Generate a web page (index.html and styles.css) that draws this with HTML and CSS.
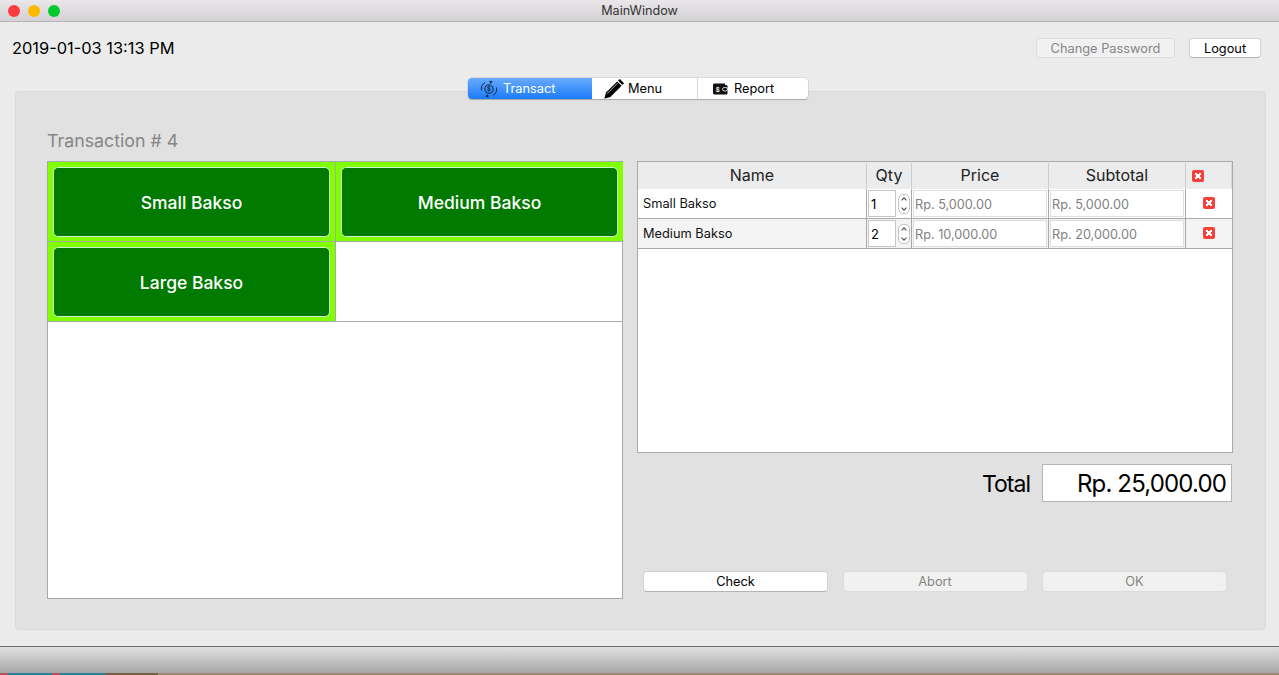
FILE: index.html
```html
<!DOCTYPE html>
<html lang="en">
<head>
    <meta charset="UTF-8">
    <title>MainWindow</title>
    <link rel="stylesheet" href="styles.css">
</head>
<body>
    <div class="window">
        <div class="titlebar">
            <div class="lights">
                <span class="light red"></span>
                <span class="light yellow"></span>
                <span class="light green"></span>
            </div>
            <span class="title">MainWindow</span>
        </div>

        <div class="content">
            <div class="topbar">
                <span class="clock">2019-01-03 13:13 PM</span>
                <div class="top-actions">
                    <button class="btn disabled change-pass">Change Password</button>
                    <button class="btn logout">Logout</button>
                </div>
            </div>

            <div class="tabs">
                <div class="tab active tab-transact">
                    <svg class="tab-icon" width="18" height="18" viewBox="0 0 18 18">
                        <circle cx="9" cy="9" r="4.2" fill="none" stroke="#10233f" stroke-width="1"/>
                        <text x="9" y="11.1" text-anchor="middle" class="dollar">$</text>
                        <path d="M1.5 10.5A7.6 7.6 0 0 1 5 2.5" fill="none" stroke="#10233f" stroke-width="0.9"/>
                        <path d="M16.5 7.5A7.6 7.6 0 0 1 13 15.5" fill="none" stroke="#10233f" stroke-width="0.9"/>
                        <path d="M9.5 0.4L13 1.8 10 3.8Z" fill="#10233f"/>
                        <path d="M8.5 17.6L5 16.2 8 14.2Z" fill="#10233f"/>
                    </svg>
                    <span>Transact</span>
                </div>
                <div class="tab tab-menu">
                    <svg class="tab-icon" width="20" height="20" viewBox="0 0 20 20">
                        <path d="M0.5 19.5L2 13.6 13.2 2.4 17.6 6.8 6.4 18Z" fill="#000"/>
                        <path d="M14 1.6L15.8 0 20 4.2 18.4 6Z" fill="#000"/>
                        <path d="M3.2 14.6L13.6 4.2" stroke="#fff" stroke-width="0.7"/>
                        <path d="M1.4 16.2L3.8 18.6 0.5 19.5Z" fill="#000"/>
                    </svg>
                    <span>Menu</span>
                </div>
                <div class="tab tab-report">
                    <svg class="tab-icon" width="15" height="12" viewBox="0 0 15 12">
                        <path d="M1.5 0.5H12V2H13C14 2 14.5 2.6 14.5 3.5V10C14.5 11 14 11.5 13 11.5H1.5C0.7 11.5 0 10.9 0 10V2C0 1.1 0.7 0.5 1.5 0.5Z" fill="#111"/>
                        <rect x="9.5" y="4.5" width="5" height="3.4" rx="1.7" fill="none" stroke="#fff" stroke-width="0.8"/>
                        <text x="4.6" y="8.6" text-anchor="middle" class="wallet-mark">$</text>
                    </svg>
                    <span>Report</span>
                </div>
            </div>

            <div class="panel">
                <h2 class="heading">Transaction # 4</h2>
                <div class="columns">
                    <div class="products">
                        <div class="cell filled"><button class="product">Small Bakso</button></div>
                        <div class="cell filled"><button class="product">Medium Bakso</button></div>
                        <div class="cell filled"><button class="product">Large Bakso</button></div>
                        <div class="cell"></div>
                    </div>

                    <div class="side">
                        <div class="order">
                            <div class="order-row order-head">
                                <div class="hcell"><span class="hlabel">Name</span></div>
                                <div class="hcell"><span class="hlabel">Qty</span></div>
                                <div class="hcell"><span class="hlabel">Price</span></div>
                                <div class="hcell"><span class="hlabel">Subtotal</span></div>
                                <div class="hcell hcell-x"><span class="del"></span></div>
                            </div>
                            <div class="order-row line">
                                <div class="dcell name">Small Bakso</div>
                                <div class="dcell qty">
                                    <span class="qty-val">1</span>
                                    <span class="stepper"><i class="up"></i><i class="down"></i></span>
                                </div>
                                <div class="dcell"><span class="ro">Rp. 5,000.00</span></div>
                                <div class="dcell"><span class="ro">Rp. 5,000.00</span></div>
                                <div class="dcell x"><span class="del"></span></div>
                            </div>
                            <div class="order-row line alt">
                                <div class="dcell name">Medium Bakso</div>
                                <div class="dcell qty">
                                    <span class="qty-val">2</span>
                                    <span class="stepper"><i class="up"></i><i class="down"></i></span>
                                </div>
                                <div class="dcell"><span class="ro">Rp. 10,000.00</span></div>
                                <div class="dcell"><span class="ro">Rp. 20,000.00</span></div>
                                <div class="dcell x"><span class="del"></span></div>
                            </div>
                        </div>

                        <div class="total-row">
                            <span class="total-label">Total</span>
                            <span class="total-val">Rp. 25,000.00</span>
                        </div>

                        <div class="actions">
                            <button class="btn check">Check</button>
                            <button class="btn disabled">Abort</button>
                            <button class="btn disabled">OK</button>
                        </div>
                    </div>
                </div>
            </div>
        </div>

        <div class="bottombar"></div>
    </div>
    <div class="desktop"></div>
</body>
</html>
```

FILE: styles.css
```css
* {
    box-sizing: border-box;
}

body, html {
    height: 100%;
    margin: 0;
    overflow: hidden;
    font-family: Inter, "Noto Sans", sans-serif;
    background: #e9e9e9;
}

.window {
    height: 673px;
    display: flex;
    flex-direction: column;
}

.titlebar {
    height: 22px;
    display: flex;
    align-items: center;
    justify-content: center;
    position: relative;
    background: linear-gradient(#e9e7e9, #d3d1d3);
    border-bottom: 1px solid #b5b5b5;
}

.lights {
    position: absolute;
    left: 8px;
    top: 5px;
    display: flex;
    gap: 8px;
}

.light {
    width: 12px;
    height: 12px;
    border-radius: 50%;
}

.red { background: #fc3a42; }
.yellow { background: #fdb900; }
.green { background: #02ca2e; }

.title {
    font-size: 12.6px;
    color: #333;
}

.content {
    flex: 1;
    padding: 0 14px 0 15px;
    background: #ebebeb;
    border-bottom: 1px solid #6e6e6e;
    height: 625px;
}

.topbar {
    height: 56px;
    display: flex;
    justify-content: space-between;
    margin-left: -3px;
    padding-top: 16px;
}

.clock {
    margin-top: 1px;
    font-size: 16.4px;
    line-height: 19px;
    color: #000;
}

.top-actions {
    display: flex;
    gap: 14px;
    margin-right: 4px;
}

.btn {
    height: 20px;
    padding: 0;
    border-radius: 4px;
    font-family: inherit;
    font-size: 12.8px;
    background: #fff;
    color: #000;
    border: 1px solid #d2d2d2;
    border-bottom-color: #b4b4b4;
}

.btn.disabled {
    background: #f1f1f1;
    color: #858585;
    border-color: #dcdcdc;
}

.change-pass { width: 139px; }
.logout { width: 72px; }

.tabs {
    height: 21px;
    width: 340px;
    margin: 0 0 -8px 453px;
    display: flex;
    position: relative;
    background: #fff;
    border-radius: 4px;
    box-shadow: 0 1px 1px #a9a9a9, 0 0 0 0.5px #c9c9c9;
    font-size: 12.8px;
}

.tab {
    display: flex;
    align-items: center;
    color: #000;
}

.tab-transact {
    width: 124px;
    padding-left: 12px;
    gap: 5px;
    color: #fff;
    border-radius: 4px 0 0 4px;
    background: linear-gradient(#69aafc, #1a7cfb);
}

.tab-menu {
    width: 106px;
    padding-left: 12px;
    gap: 4px;
    border-right: 1px solid #d9d9d9;
}

.tab-report {
    width: 110px;
    padding-left: 15px;
    gap: 6px;
}

.tab-icon {
    flex: none;
}

.dollar {
    font-size: 6px;
    font-weight: 700;
    fill: #10233f;
}

.wallet-mark {
    font-size: 6px;
    font-weight: 700;
    fill: #fff;
}

.panel {
    height: 539px;
    padding: 38px 31px 0;
    background: #e1e1e1;
    border: 1px solid #dadada;
    border-radius: 4px;
    margin-right: -1px;
}

.heading {
    margin: 0;
    height: 31px;
    font-size: 17.8px;
    line-height: 22px;
    font-weight: 400;
    color: #868686;
}

.columns {
    display: flex;
    gap: 14px;
}

.products {
    width: 576px;
    height: 438px;
    display: grid;
    grid-template-columns: 288px 287px;
    grid-template-rows: 80px 80px;
    background: #fff;
    border: 1px solid #a9a9a9;
}

.cell {
    border-bottom: 1px solid #a9a9a9;
}

.cell:nth-child(odd) {
    border-right: 1px solid #a9a9a9;
}

.filled {
    background: #7fff00;
    padding: 5px;
}

.product {
    width: 100%;
    height: 70px;
    padding: 0;
    background: #007a00;
    border: 1px solid #cfeecf;
    border-radius: 5px;
    color: #fff;
    font-family: inherit;
    font-size: 17.5px;
    font-weight: 500;
}

.side {
    width: 596px;
}

.order {
    height: 292px;
    background: #fff;
    border: 1px solid #a9a9a9;
}

.order-row {
    display: grid;
    grid-template-columns: 229px 45px 137px 137px 46px;
}

.order-head {
    height: 27px;
    background: #ececec;
}

.hcell {
    height: 25px;
    margin-top: 1px;
    display: flex;
    align-items: center;
    justify-content: center;
    font-size: 16px;
    color: #222;
    border-right: 1px solid #cdcdcd;
}

.hlabel {
    margin-bottom: 2px;
}

.hcell-x {
    justify-content: flex-start;
    padding-left: 6px;
    border-right: 1px solid #d8d8d8;
}

.line {
    height: 30px;
    background: #fff;
    border-bottom: 1px solid #a9a9a9;
}

.line.alt {
    background: #f4f4f4;
}

.dcell {
    display: flex;
    align-items: center;
    padding: 1px;
    border-right: 1px solid #a9a9a9;
    font-size: 12.8px;
}

.name {
    padding-left: 5px;
    color: #111;
}

.qty {
    gap: 1px;
}

.qty-val {
    width: 28px;
    height: 27px;
    line-height: 27px;
    padding-left: 2px;
    font-size: 13px;
    background: #fff;
    border: 1px solid #c6c6c6;
}

.stepper {
    width: 12px;
    height: 20px;
    margin-left: 1px;
    display: flex;
    flex-direction: column;
    align-items: center;
    justify-content: center;
    gap: 4px;
    background: #fff;
    border: 1px solid #c4c4c4;
    border-radius: 5px;
}

.stepper i {
    width: 4px;
    height: 4px;
    border-left: 1px solid #444;
    border-top: 1px solid #444;
}

.stepper .up {
    transform: rotate(45deg);
    margin-top: 2px;
}

.stepper .down {
    transform: rotate(225deg);
    margin-bottom: 2px;
}

.ro {
    width: 100%;
    height: 27px;
    line-height: 27px;
    padding-left: 1px;
    color: #7f7f7f;
    font-size: 12.7px;
    background: #fff;
    border: 1px solid #dedede;
}

.x {
    justify-content: center;
    padding-bottom: 3px;
    border-right: none;
}

.del {
    width: 12px;
    height: 12px;
    display: block;
    border-radius: 2px;
    background-color: #f6403a;
    background-image:
        linear-gradient(45deg, transparent 41%, #fff 41%, #fff 59%, transparent 59%),
        linear-gradient(-45deg, transparent 41%, #fff 41%, #fff 59%, transparent 59%);
    background-size: 6px 6px;
    background-position: center;
    background-repeat: no-repeat;
}

.total-row {
    margin-top: 11px;
    height: 38px;
    display: flex;
    align-items: center;
    justify-content: flex-end;
    gap: 12px;
    padding-right: 1px;
}

.total-label {
    padding-top: 2px;
    font-size: 23px;
    letter-spacing: -1px;
}

.total-val {
    width: 190px;
    height: 38px;
    line-height: 38px;
    text-align: right;
    padding-right: 5px;
    font-size: 24px;
    letter-spacing: -0.85px;
    background: #fff;
    border: 1px solid #b5b5b5;
}

.actions {
    margin-top: 69px;
    padding: 0 6px;
    display: flex;
    justify-content: space-between;
}

.actions .btn {
    width: 185px;
    height: 21px;
}

.bottombar {
    height: 26px;
    flex: none;
    background: linear-gradient(#e0e0e0, #a6a6a6);
}

.desktop {
    height: 2px;
    background: linear-gradient(90deg, #b5545c 0 8px, #2a7f9f 8px 52px, #b5545c 52px 60px, #2a7f9f 60px 105px, #7a5f45 105px 158px, #a08a70 158px);
}
```
